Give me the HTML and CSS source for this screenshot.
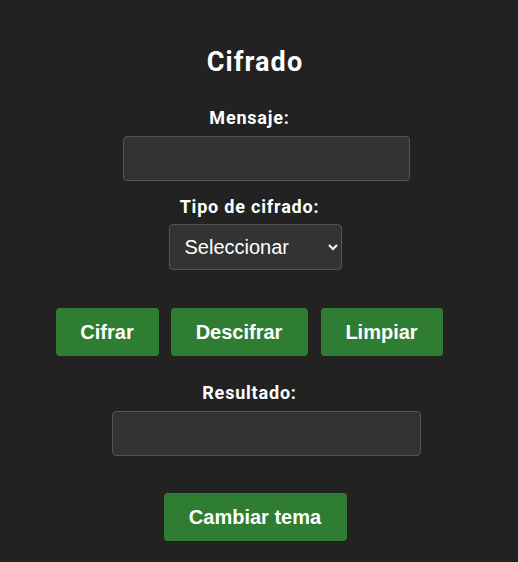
FILE: index.html
```html
<!DOCTYPE html>
<html lang="es">
<head>
<meta charset="utf-8">
<title>Cifrado</title>
<link rel="stylesheet" href="styles.css">
</head>
<body>
<main class="app">
  <h1 class="title">Cifrado</h1>
  <label class="label label-first" for="msg">Mensaje:</label>
  <input class="field field-msg" id="msg" type="text">
  <label class="label label-tipo" for="tipo">Tipo de cifrado:</label>
  <select class="select" id="tipo">
    <option>Seleccionar</option>
  </select>
  <div class="actions">
    <button class="btn btn-cifrar">Cifrar</button>
    <button class="btn btn-descifrar">Descifrar</button>
    <button class="btn btn-limpiar">Limpiar</button>
  </div>
  <label class="label label-res">Resultado:</label>
  <div class="field field-res"></div>
  <button class="btn btn-tema">Cambiar tema</button>
</main>
</body>
</html>
```

FILE: styles.css
```css
html, body {
  margin: 0;
  padding: 0;
  background: #222222;
  height: 100%;
}
body {
  font-family: Roboto, "Liberation Sans", Arial, sans-serif;
  color: #ffffff;
}
.app {
  display: flex;
  flex-direction: column;
  align-items: center;
  padding: 45px 2px 0 0;
}
.title {
  margin: 0 6px 0 0;
  font-size: 27px;
  letter-spacing: 1.1px;
  line-height: 34px;
  font-weight: 700;
}
.label {
  display: block;
  font-size: 18px;
  letter-spacing: 0.8px;
  line-height: 22px;
  font-weight: 700;
  margin-right: 17px;
}
.label-first { margin-top: 28px; }
.label-tipo { margin-top: 15px; }
.label-res { margin-top: 26px; }
.field {
  box-sizing: border-box;
  height: 45px;
  background: #333333;
  border: 1px solid #555555;
  border-radius: 4px;
  margin-top: 7px;
  margin-left: 16px;
  color: #fff;
  outline: none;
}
.field-msg { width: 287px; }
.field-res { width: 309px; }
.select {
  box-sizing: border-box;
  margin: 6px 6px 0 0;
  width: 173px;
  height: 46px;
  background: #333333;
  color: #ffffff;
  border: 1px solid #555555;
  border-radius: 4px;
  font-family: "Liberation Sans", Arial, sans-serif;
  font-size: 20px;
  padding: 0 10px 0 11px;
  color-scheme: dark;
}
.actions {
  display: flex;
  gap: 12px;
  margin: 38px 18px 0 0;
}
.btn {
  box-sizing: border-box;
  height: 48px;
  padding: 0;
  background: #2e7d32;
  color: #ffffff;
  border: none;
  border-radius: 4px;
  font-family: "Liberation Sans", Arial, sans-serif;
  font-size: 20px;
  font-weight: 700;
}
.btn-cifrar { width: 103px; }
.btn-descifrar { width: 137px; }
.btn-limpiar { width: 122px; margin-left: 1px; }
.btn-tema {
  width: 183px;
  margin: 37px 6px 0 0;
}
```
